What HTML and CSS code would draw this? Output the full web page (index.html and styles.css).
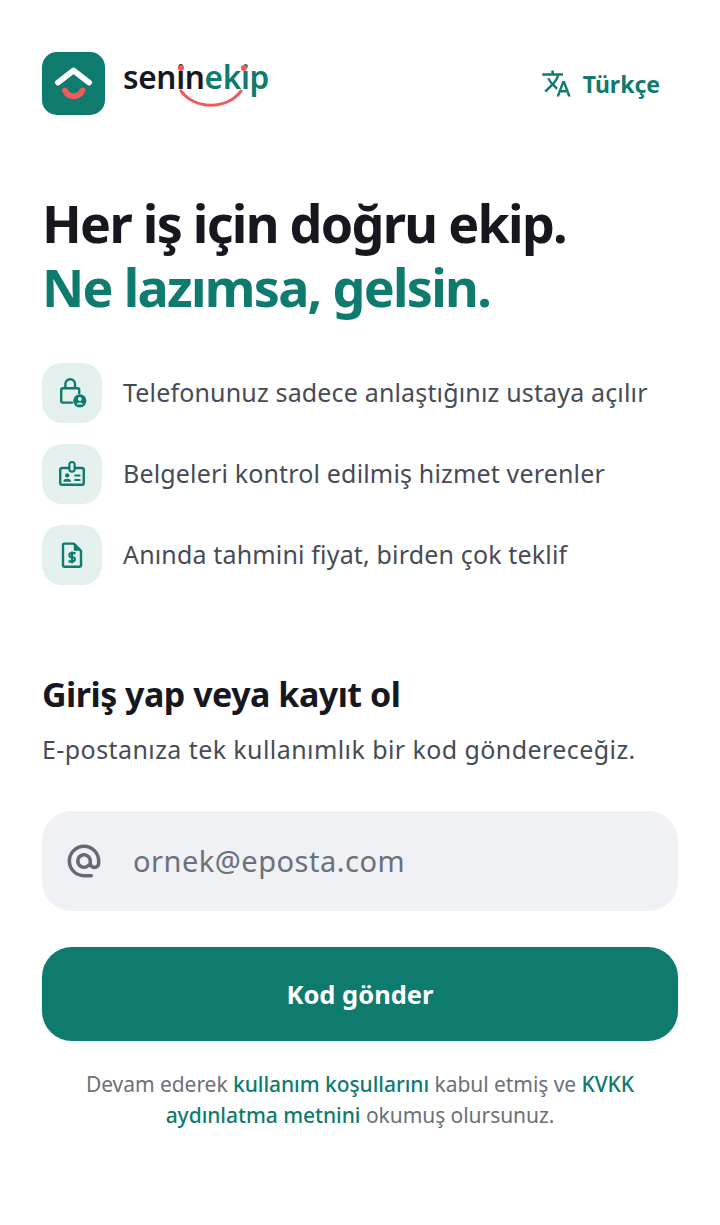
FILE: index.html
```html
<!DOCTYPE html>
<html lang="tr">
<head>
<meta charset="utf-8">
<title>seninekip</title>
<link rel="stylesheet" href="styles.css">
</head>
<body>
<main class="page">
  <header class="topbar">
    <div class="brand">
      <svg class="brand-mark" viewBox="0 0 63 63" width="63" height="63" aria-hidden="true">
        <rect width="63" height="63" rx="15" fill="#0f7a6e"/>
        <path d="M16 30.500 L31.500 18.500 L47 30.500" fill="none" stroke="#fff" stroke-width="6" stroke-linecap="round" stroke-linejoin="round"/>
        <path d="M23 38.500 C26 46 37 46 40.500 38.500" fill="none" stroke="#ef5b5b" stroke-width="6" stroke-linecap="round"/>
      </svg>
      <div class="wordmark">
        <span class="word-dark">senin</span><span class="word-teal">ekip</span>
        <svg class="smile" viewBox="0 0 70 26" width="70" height="26" aria-hidden="true">
          <path d="M4 3 C18 22 50 22 64 3" fill="none" stroke="#ef5b5b" stroke-width="3" stroke-linecap="round"/>
        </svg>
        <span class="dot dot-left"></span>
        <span class="dot dot-right"></span>
      </div>
    </div>
    <div class="lang">
      <svg viewBox="0 0 24 24" width="31" height="31" aria-hidden="true" class="lang-icon">
        <path fill="currentColor" d="M12.870 15.070l-2.540-2.510.030-.030c1.740-1.940 2.980-4.170 3.710-6.530H17V4h-7V2H8v2H1v1.990h11.170C11.500 7.920 10.440 9.750 9 11.350 8.070 10.320 7.300 9.190 6.690 8h-2c.730 1.630 1.730 3.170 2.980 4.560l-5.090 5.020L4 19l5-5 3.110 3.110.760-2.040zM18.500 10h-2L12 22h2l1.120-3h4.750L21 22h2l-4.500-12zm-2.620 7l1.620-4.330L19.120 17h-3.240z"/>
      </svg>
      <span>Türkçe</span>
    </div>
  </header>

  <h1 class="hero"><span>Her iş için doğru ekip.</span><span class="hero-accent">Ne lazımsa, gelsin.</span></h1>

  <ul class="features">
    <li class="feature">
      <span class="feature-icon">
        <svg viewBox="0 0 30 30" width="36" height="36" aria-hidden="true">
          <path d="M15 23H7.500a1.500 1.500 0 0 1-1.500-1.500V12.500A1.500 1.500 0 0 1 7.500 11h12a1.500 1.500 0 0 1 1.500 1.500V15M9.500 11V7.500a4 4 0 0 1 8 0V11" fill="none" stroke="#0f7a6e" stroke-width="2" stroke-linecap="round"/>
          <circle cx="21.500" cy="21.500" r="5.500" fill="#0f7a6e"/>
          <circle cx="21.500" cy="20" r="1.600" fill="#e3f0ed"/>
          <path d="M18.800 24.500a2.800 2.200 0 0 1 5.400 0z" fill="#e3f0ed"/>
        </svg>
      </span>
      <span class="feature-text">Telefonunuz sadece anlaştığınız ustaya açılır</span>
    </li>
    <li class="feature">
      <span class="feature-icon">
        <svg viewBox="0 0 30 30" width="36" height="36" aria-hidden="true">
          <rect x="5.200" y="10" width="19.600" height="14" rx="1.500" fill="none" stroke="#0f7a6e" stroke-width="2"/>
          <rect x="12.800" y="5" width="4.400" height="8" rx="2.200" fill="#e3f0ed" stroke="#0f7a6e" stroke-width="1.800"/>
          <circle cx="11" cy="16.200" r="1.800" fill="#0f7a6e"/>
          <path d="M7.800 21.500a3.200 2.600 0 0 1 6.400 0z" fill="#0f7a6e"/>
          <path d="M17 16.300h5M17 20h5" stroke="#0f7a6e" stroke-width="1.700"/>
        </svg>
      </span>
      <span class="feature-text">Belgeleri kontrol edilmiş hizmet verenler</span>
    </li>
    <li class="feature">
      <span class="feature-icon">
        <svg viewBox="0 0 30 30" width="36" height="36" aria-hidden="true">
          <path d="M9 5.500h7.500l6 6v12.300a1 1 0 0 1-1 1H8.500a1 1 0 0 1-1-1V6.500a1 1 0 0 1 1-1z" fill="none" stroke="#0f7a6e" stroke-width="2" stroke-linejoin="round"/>
          <path d="M16.500 5.500v6h6z" fill="#0f7a6e"/>
          <path d="M18 13.500h-3.500a1.600 1.600 0 0 0 0 3.400h1.200a1.600 1.600 0 0 1 0 3.400H12M15 12v9.800" fill="none" stroke="#0f7a6e" stroke-width="1.800"/>
        </svg>
      </span>
      <span class="feature-text">Anında tahmini fiyat, birden çok teklif</span>
    </li>
  </ul>

  <h2 class="section-title">Giriş yap veya kayıt ol</h2>
  <p class="section-sub">E-postanıza tek kullanımlık bir kod göndereceğiz.</p>

  <div class="field">
    <svg viewBox="0 0 24 24" width="44" height="44" aria-hidden="true" class="field-icon">
      <path d="M12 20a8 8 0 1 1 8-8v1.200a2.300 2.300 0 0 1-4.600 0V12a3.400 3.400 0 1 0-1 2.400M12 20h4" fill="none" stroke="#646a75" stroke-width="1.900" stroke-linecap="round"/>
    </svg>
    <span class="field-placeholder">ornek@eposta.com</span>
  </div>

  <div class="submit">Kod gönder</div>

  <p class="legal">Devam ederek <a>kullanım koşullarını</a> kabul etmiş ve <a>KVKK aydınlatma metnini</a> okumuş olursunuz.</p>
</main>
</body>
</html>
```
FILE: styles.css
```css
* { box-sizing: border-box; }
html, body { margin: 0; padding: 0; background: #fff; }
body { font-family: "Noto Sans", "Open Sans", sans-serif; color: #17181f; }
.page { width: 720px; height: 1225px; padding: 52px 42px 0; overflow: hidden; }
.topbar { display: flex; justify-content: space-between; align-items: center; height: 63px; padding-right: 18px; }
.brand { display: flex; align-items: center; gap: 18px; }
.brand-mark { display: block; }
.wordmark { position: relative; font-size: 31.500px; font-weight: 600; line-height: 36px; margin-top: -13px; letter-spacing: -0.3px; }
.word-dark { color: #17181f; }
.word-teal { color: #0f7a6e; }
.smile { position: absolute; left: 54px; top: 29px; }
.dot { position: absolute; width: 6px; height: 6px; border-radius: 50%; background: #ef5b5b; }
.dot-left { left: 54.500px; top: 6px; }
.dot-right { left: 118px; top: 6px; }
.lang { display: flex; align-items: center; gap: 11px; color: #0f7a6e; font-size: 23px; font-weight: 700; }
.lang-icon { display: block; }
.hero { margin: 76px 0 0; font-size: 52px; line-height: 64px; font-weight: 700; letter-spacing: -1.700px; display: flex; flex-direction: column; }
.hero-accent { color: #0f7a6e; }
.features { list-style: none; margin: 44px 0 0; padding: 0; display: flex; flex-direction: column; gap: 21px; }
.feature { display: flex; align-items: center; gap: 21px; font-size: 25px; letter-spacing: 0.16px; color: #474b55; height: 60px; }
.feature-text { margin-bottom: 2px; }
.feature-icon { width: 60px; height: 60px; border-radius: 20px; background: #e3f0ed; display: flex; align-items: center; justify-content: center; flex: none; }
.section-title { margin: 86px 0 0; font-size: 34px; line-height: 46px; font-weight: 700; letter-spacing: -0.5px; }
.section-sub { margin: 14px 0 0; font-size: 25px; line-height: 36px; color: #474b55; letter-spacing: 0.42px; }
.field { margin-top: 44px; height: 100px; border-radius: 30px; background: #eff1f4; display: flex; align-items: center; padding-left: 20px; gap: 27px; }
.field-icon { display: block; flex: none; }
.field-placeholder { font-size: 29px; color: #6b7079; letter-spacing: 0.5px; margin-bottom: 2px; }
.submit { margin-top: 36px; height: 94px; border-radius: 30px; background: #0f7a6e; color: #fff; font-size: 25.500px; font-weight: 700; display: flex; align-items: center; justify-content: center; }
.legal { margin: 28px 0 0; padding: 0 30px; text-align: center; font-size: 21px; line-height: 31px; color: #6b7079; letter-spacing: -0.050px; }
.legal a { color: #0f7a6e; font-weight: 500; }
```
